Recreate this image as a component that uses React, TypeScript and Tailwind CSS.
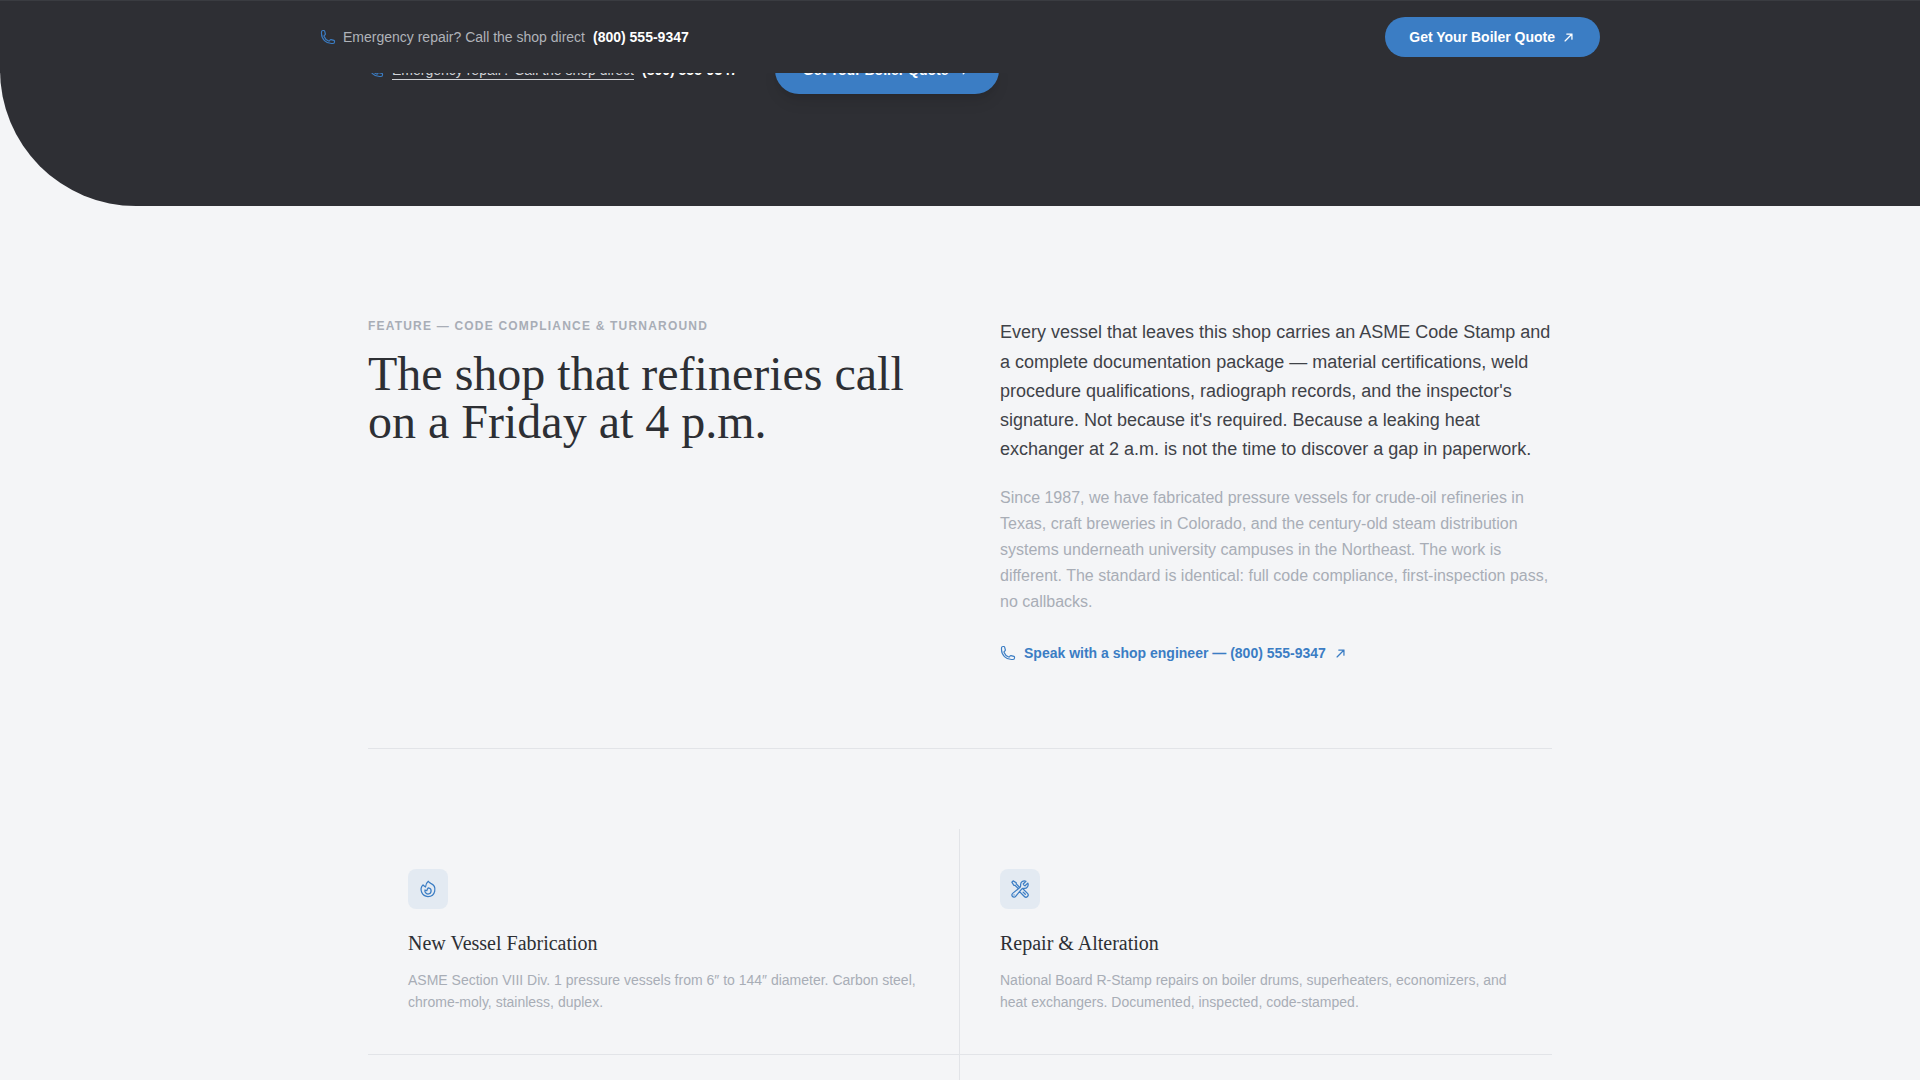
import type { ReactNode } from "react";
import { HiOutlinePhone, HiOutlineArrowUpRight, HiOutlineFire, HiOutlineWrenchScrewdriver } from "react-icons/hi2";

const sans = "font-['Liberation_Sans',Arial,sans-serif]";
const serif = "font-['Liberation_Serif','Times_New_Roman',serif]";

function Card({ icon, title, desc, border }: { icon: ReactNode; title: string; desc: string; border?: boolean }) {
  return (
    <div className={`px-10 pt-10 pb-[41px] border-b border-[#e2e4e8] ${border ? "border-r" : ""}`}>
      <div className="w-10 h-10 rounded-lg bg-[#e3eaf2] flex items-center justify-center text-[#3b7dc4] mb-5">{icon}</div>
      <h3 className={`${serif} text-xl leading-7 text-[#2d2f34] mb-3`}>{title}</h3>
      <p className="text-sm leading-[22px] text-[#a8adb6]">{desc}</p>
    </div>
  );
}

export default function App() {
  return (
    <div className={`${sans} relative h-screen overflow-hidden bg-[#f4f5f7]`}>
      {/* sticky bar laid over the hero */}
      <div className="absolute top-0 inset-x-0 z-10 h-[73px] bg-[#2e2f34] border-t border-[#3a3c41]">
        <div className="max-w-[1280px] mx-auto h-[72px] flex items-center justify-between">
          <div className="flex items-center text-sm">
            <HiOutlinePhone size={16} strokeWidth={1.75} className="text-[#3b7dc4] mr-[7px]" />
            <span className="text-[#b0b3b9] mr-2">Emergency repair? Call the shop direct</span>
            <span className="text-white font-bold">(800) 555-9347</span>
          </div>
          <a className="flex items-center gap-2 h-10 px-6 rounded-full bg-[#3b7dc4] text-white text-sm font-bold">
            Get Your Boiler Quote <HiOutlineArrowUpRight size={11} strokeWidth={2.75} className="mr-0.5" />
          </a>
        </div>
      </div>

      {/* hero tail */}
      <section className="h-[206px] bg-[#2e2f34] rounded-bl-[136px] flex items-start pt-[46px]">
        <div className="w-[1184px] mx-auto flex items-center gap-[37px]">
          <div className="flex items-center gap-2 text-sm">
            <HiOutlinePhone size={16} strokeWidth={1.75} className="text-[#3b7dc4]" />
            <span className="text-[#d1d3d7] underline underline-offset-4">Emergency repair? Call the shop direct</span>
            <span className="text-white font-bold">(800) 555-9347</span>
          </div>
          <a className="flex items-center gap-3 h-12 w-[224px] pl-7 rounded-full bg-[#3b7dc4] text-white text-sm font-bold shadow-lg">
            Get Your Boiler Quote <HiOutlineArrowUpRight size={12} strokeWidth={2.75} />
          </a>
        </div>
      </section>

      <main className="w-[1184px] mx-auto">
        <div className="grid grid-cols-2 gap-20 pt-[112px] pb-20 border-b border-[#e2e4e8]">
          <div>
            <p className="text-xs font-bold tracking-[0.1em] text-[#a8adb6] leading-4 mb-4">FEATURE — CODE COMPLIANCE &amp; TURNAROUND</p>
            <h2 className={`${serif} text-5xl leading-[48px] text-[#2d2f34]`}>
              The shop that refineries call<br />on a Friday at 4 p.m.
            </h2>
          </div>
          <div>
            <p className="text-lg leading-[29.25px] text-[#3f4248] pt-[0.4px] mb-[20.6px]">
              Every vessel that leaves this shop carries an ASME Code Stamp and a complete documentation package — material certifications, weld procedure qualifications, radiograph records, and the inspector's signature. Not because it's required. Because a leaking heat exchanger at 2 a.m. is not the time to discover a gap in paperwork.
            </p>
            <p className="text-base leading-[26px] text-[#a8adb6] mb-[28px]">
              Since 1987, we have fabricated pressure vessels for crude-oil refineries in Texas, craft breweries in Colorado, and the century-old steam distribution systems underneath university campuses in the Northeast. The work is different. The standard is identical: full code compliance, first-inspection pass, no callbacks.
            </p>
            <a className="inline-flex items-center gap-2 text-sm font-bold text-[#3b7dc4]">
              <HiOutlinePhone size={16} strokeWidth={1.75} />
              Speak with a shop engineer — (800) 555-9347
              <HiOutlineArrowUpRight size={11} strokeWidth={2.75} className="ml-px" />
            </a>
          </div>
        </div>

        <div className="grid grid-cols-2 mt-20">
          <Card border icon={<HiOutlineFire size={20} />} title="New Vessel Fabrication" desc="ASME Section VIII Div. 1 pressure vessels from 6″ to 144″ diameter. Carbon steel, chrome-moly, stainless, duplex." />
          <Card icon={<HiOutlineWrenchScrewdriver size={20} />} title="Repair & Alteration" desc="National Board R-Stamp repairs on boiler drums, superheaters, economizers, and heat exchangers. Documented, inspected, code-stamped." />
          <div className="h-[200px] border-r border-[#e2e4e8]" />
        </div>
      </main>
    </div>
  );
}
